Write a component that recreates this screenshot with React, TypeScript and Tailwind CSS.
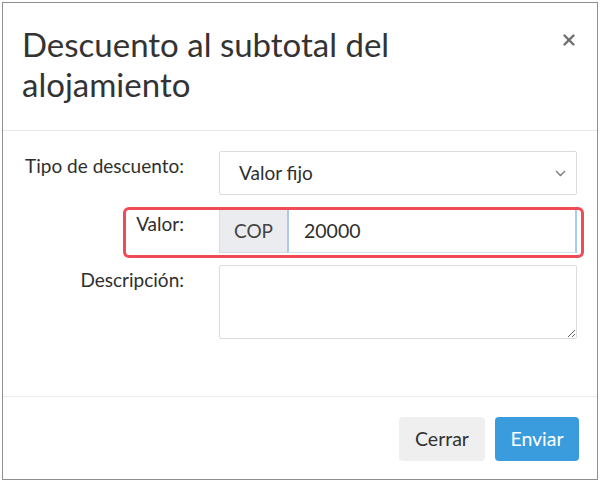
import { X } from 'lucide-react';

function FieldLabel({ children }: { children: string }) {
  return (
    <label className="w-[182px] shrink-0 pt-[3px] pr-[1px] text-right text-[19px] leading-[24px] text-[#2e2e2e]">
      {children}
    </label>
  );
}

export default function App() {
  return (
    <div className="h-[481px] w-[600px] overflow-hidden bg-white pl-[2px] pt-[2px] font-['Lato','Liberation_Sans',sans-serif]">
      <div className="flex h-[478px] w-[596px] flex-col border border-[#8f8f8f] bg-white">
        <div className="flex h-[128px] shrink-0 items-start justify-between border-b border-[#e8e8e8] pl-[19px] pr-[19px] pt-[21px]">
          <h4 className="w-[420px] text-[33px] leading-[40px] text-[#333]">Descuento al subtotal del alojamiento</h4>
          <button className="mt-[7px] text-[#6f6f6f]" title="Cerrar">
            <X size={18} strokeWidth={3.2} />
          </button>
        </div>

        <div className="flex flex-1 flex-col pt-[20px]">
          <div className="flex">
            <FieldLabel>Tipo de descuento:</FieldLabel>
            <div className="ml-[34px] flex h-[44px] w-[358px] items-center justify-between rounded-[2px] border border-[#dcdcdc] pl-[19px] pr-[10px] text-[19px] text-[#2e2e2e]">
              <span>Valor fijo</span>
              <svg width="11" height="7" viewBox="0 0 11 7" fill="none" stroke="#777" strokeWidth="1.3">
                <path d="M1 1l4.5 4.5L10 1" />
              </svg>
            </div>
          </div>

          <div className="relative mt-[14px] flex">
            <FieldLabel>Valor:</FieldLabel>
            <div className="ml-[34px] flex h-[44px] w-[358px]">
              <div className="flex w-[68px] items-center justify-center border border-r-0 border-[#d8dbe0] bg-[#eaecef] text-[19px] text-[#444]">
                COP
              </div>
              <div className="flex flex-1 items-center border border-l-2 border-[#d3e2f4] border-l-[#a9c9f1] border-r-2 border-r-[#a9c9f1] pl-[15px] text-[19.5px] text-[#2e2e2e]">
                20000
              </div>
            </div>
            <div className="pointer-events-none absolute left-[120px] top-[-2px] h-[51px] w-[461px] rounded-[6px] border-[3px] border-[#f04a56]" />
          </div>

          <div className="mt-[12px] flex">
            <FieldLabel>Descripción:</FieldLabel>
            <textarea
              className="ml-[34px] h-[74px] w-[358px] rounded-[2px] border border-[#dcdcdc] bg-white"
              defaultValue=""
            />
          </div>
        </div>

        <div className="flex h-[83px] shrink-0 items-start justify-end gap-[10px] border-t border-[#ececec] pr-[18px] pt-[20px]">
          <button className="h-[44px] w-[86px] rounded-[4px] bg-[#efefef] text-[19.5px] text-[#333]">Cerrar</button>
          <button className="h-[44px] w-[84px] rounded-[4px] bg-[#3a9cdc] text-[19.5px] text-white">Enviar</button>
        </div>
      </div>
    </div>
  );
}
